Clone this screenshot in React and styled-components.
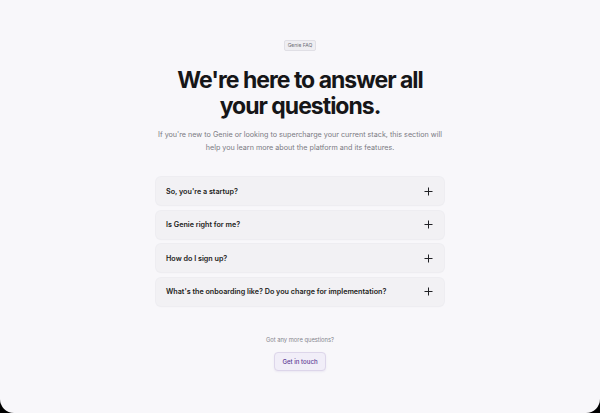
import React from 'react';
import styled, { createGlobalStyle } from 'styled-components';

const Global = createGlobalStyle`
  html, body { margin: 0; padding: 0; background: #000; }
  body { font-family: Inter, "Liberation Sans", sans-serif; }
`;

const Page = styled.div`
  width: 600px;
  height: 413px;
  background: #f8f7fa;
  border-radius: 0 0 14px 14px;
  display: flex;
  flex-direction: column;
  align-items: center;
  box-sizing: border-box;
  padding-top: 40px;
`;

const Badge = styled.div`
  font-size: 5px;
  color: #707079;
  background: #efeef2;
  border: 1px solid #e0dfe5;
  border-radius: 2px;
  padding: 1px 3px;
  line-height: 7px;
`;

const Title = styled.h1`
  margin: 16px 0 0;
  font-size: 23px;
  line-height: 26px;
  font-weight: 700;
  letter-spacing: -1px;
  color: #161618;
  text-align: center;
`;

const Lead = styled.p`
  margin: 9px 0 0;
  font-size: 7.2px;
  line-height: 13px;
  color: #7a7a82;
  text-align: center;
`;

const List = styled.div`
  margin-top: 23px;
  width: 288px;
  display: flex;
  flex-direction: column;
  gap: 5.6px;
`;

const Item = styled.div`
  height: 28px;
  box-sizing: border-box;
  padding: 0 10px 0 10px;
  display: flex;
  align-items: center;
  justify-content: space-between;
  background: #f2f1f4;
  border-radius: 5px;
  box-shadow: 0 0 0 1px #eeedf1, 0 1px 2px rgba(0, 0, 0, 0.03);
`;

const Question = styled.span`
  font-size: 7.2px;
  font-weight: 600;
  color: #1c1c20;
`;

const Plus = () => (
  <svg width="9" height="9" viewBox="0 0 9 9" style={{ marginRight: 1 }}>
    <path d="M4.5 0.5v8M0.5 4.5h8" stroke="#222226" strokeWidth="1" />
  </svg>
);

const More = styled.p`
  margin: 30px 0 0;
  font-size: 5.8px;
  color: #85858d;
`;

const Cta = styled.button`
  margin-top: 9px;
  width: 52px;
  height: 19px;
  padding: 0;
  font-family: inherit;
  font-size: 6.1px;
  font-weight: 500;
  color: #5b3a94;
  background: #f1eef8;
  border: 1px solid #ddd6ea;
  border-radius: 4px;
  box-shadow: 0 1px 2px rgba(90, 60, 150, 0.08);
`;

const questions = [
  "So, you're a startup?",
  'Is Genie right for me?',
  'How do I sign up?',
  "What's the onboarding like? Do you charge for implementation?",
];

export default function App() {
  return (
    <>
      <Global />
      <Page>
        <Badge>Genie FAQ</Badge>
        <Title>
          We're here to answer all
          <br />
          your questions.
        </Title>
        <Lead>
          If you're new to Genie or looking to supercharge your current stack, this section will
          <br />
          help you learn more about the platform and its features.
        </Lead>
        <List>
          {questions.map((q) => (
            <Item key={q}>
              <Question>{q}</Question>
              <Plus />
            </Item>
          ))}
        </List>
        <More>Got any more questions?</More>
        <Cta>Get in touch</Cta>
      </Page>
    </>
  );
}
